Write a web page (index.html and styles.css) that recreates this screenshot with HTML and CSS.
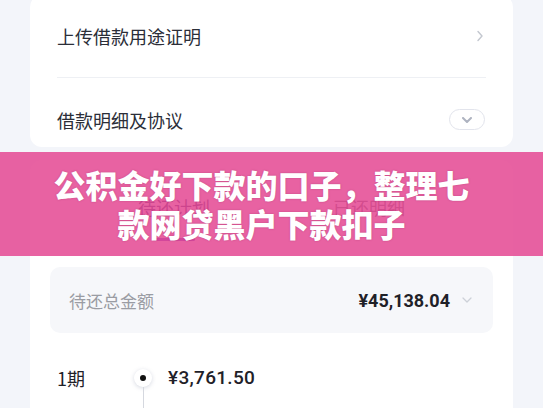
FILE: index.html
```html
<!DOCTYPE html>
<html lang="zh">
<head>
<meta charset="utf-8">
<link rel="stylesheet" href="styles.css">
</head>
<body>
<div class="page">
  <section class="card card-top">
    <div class="row row-first">
      <span class="row-label">上传借款用途证明</span>
      <svg class="chev-right" width="8" height="12" viewBox="0 0 8 12"><path d="M2 1.5 L6 6 L2 10.5" fill="none" stroke="#c3c7cf" stroke-width="1.4" stroke-linecap="round" stroke-linejoin="round"/></svg>
    </div>
    <div class="divider"></div>
    <div class="row row-second">
      <span class="row-label">借款明细及协议</span>
      <span class="pill"><svg width="10" height="6" viewBox="0 0 10 6"><path d="M1 1 L5 5 L9 1" fill="none" stroke="#aeb3c0" stroke-width="2" stroke-linecap="round" stroke-linejoin="round"/></svg></span>
    </div>
  </section>

  <section class="card card-plan">
    <div class="tabs">
      <div class="tab tab-active">待还计划<span class="tab-line"></span></div>
      <div class="tab">已还明细</div>
    </div>
    <div class="total">
      <span class="total-label">待还总金额</span>
      <span class="total-right">
        <span class="total-amount">¥45,138.04</span>
        <svg width="10" height="6" viewBox="0 0 10 6"><path d="M1 1 L5 5 L9 1" fill="none" stroke="#cdd1d8" stroke-width="1.3" stroke-linecap="round" stroke-linejoin="round"/></svg>
      </span>
    </div>
    <div class="term">
      <div class="term-left">
        <div class="term-name">1期</div>
        <div class="term-date">2024/08/20</div>
      </div>
      <div class="term-axis">
        <span class="dot-halo"><span class="dot"></span></span>
        <span class="axis-line"></span>
      </div>
      <div class="term-right">
        <div class="term-amount">¥3,761.50</div>
        <div class="term-detail">本金 ¥3,500.00　利息 ¥261.50</div>
      </div>
    </div>
  </section>
</div>

<div class="banner">
  <p class="banner-text">公积金好下款的口子，整理七<br>款网贷黑户下款扣子</p>
</div>
</body>
</html>
```

FILE: styles.css
```css
html, body {
  margin: 0;
  padding: 0;
}
body {
  background: #f3f5fa;
  font-family: "Noto Sans CJK SC", "Noto Sans", sans-serif;
  color: #2a2d36;
  width: 543px;
  height: 408px;
  overflow: hidden;
  position: relative;
}
.page {
  display: flex;
  flex-direction: column;
  gap: 13px;
  padding: 0 30px;
  margin-top: -5px;
}
.card {
  background: #ffffff;
  border-radius: 12px;
}
.card-top {
  padding: 0 27px;
}
.row {
  display: flex;
  justify-content: space-between;
  align-items: center;
}
.row-first {
  height: 82px;
}
.row-second {
  height: 69px;
  align-items: flex-start;
  padding-top: 30px;
  box-sizing: border-box;
}
.row-label {
  font-size: 18px;
  line-height: 24px;
  color: #2b2e38;
}
.chev-right {
  margin-right: 2px;
}
.divider {
  height: 1px;
  background: #eef0f4;
}
.pill {
  width: 36px;
  height: 21px;
  box-sizing: border-box;
  border: 1px solid #e2e4ec;
  border-radius: 11px;
  display: flex;
  align-items: center;
  justify-content: center;
  margin-top: 1px;
  margin-right: 1px;
}

.card-plan {
  padding: 35px 20px 0;
  height: 300px;
}
.tabs {
  display: flex;
  justify-content: center;
}
.tab {
  width: 195px;
  display: flex;
  flex-direction: column;
  align-items: center;
  font-size: 18px;
  line-height: 24px;
  color: #6e6470;
}
.tab-active {
  color: #3b2f6e;
}
.tab-line {
  width: 42px;
  height: 3px;
  border-radius: 2px;
  background: #6a3fc9;
  margin-top: 19px;
}
.tab:not(.tab-active) {
  padding-bottom: 22px;
}
.total {
  margin-top: 26px;
  height: 66px;
  border-radius: 10px;
  background: #f6f7fa;
  display: flex;
  align-items: center;
  justify-content: space-between;
  padding: 0 21px 0 19px;
}
.total-label {
  font-size: 17px;
  color: #9a9ca3;
}
.total-right {
  display: flex;
  align-items: center;
  gap: 12px;
}
.total-amount {
  font-family: "Roboto", "Noto Sans", sans-serif;
  font-weight: 700;
  font-size: 18px;
  letter-spacing: 0;
  color: #1f2128;
}
.term {
  display: flex;
  margin-top: 33px;
  padding-left: 7px;
}
.term-left {
  width: 77px;
}
.term-name {
  font-size: 18px;
  line-height: 24px;
  color: #1f2128;
}
.term-date, .term-detail {
  font-size: 13px;
  color: #b0b3ba;
  margin-top: 14px;
}
.term-axis {
  width: 18px;
  display: flex;
  flex-direction: column;
  align-items: center;
  padding-top: 3px;
}
.dot-halo {
  width: 18px;
  height: 18px;
  border-radius: 50%;
  background: #fff;
  box-shadow: 0 1px 4px rgba(120, 130, 160, 0.3);
  display: flex;
  align-items: center;
  justify-content: center;
}
.dot {
  width: 6px;
  height: 6px;
  border-radius: 50%;
  background: #111;
}
.axis-line {
  width: 1px;
  height: 40px;
  background: #d5d8df;
}
.term-right {
  padding-left: 16px;
}
.term-amount {
  font-family: "Roboto", "Noto Sans", sans-serif;
  font-weight: 500;
  font-size: 19px;
  line-height: 24px;
  color: #1f2128;
  letter-spacing: 0.3px;
}

.banner {
  position: absolute;
  left: 0;
  top: 152px;
  width: 543px;
  height: 104px;
  background: rgba(228, 72, 147, 0.86);
  display: flex;
  align-items: center;
  justify-content: center;
}
.banner-text {
  margin: 0 20px 0 0;
  font-family: "Noto Sans CJK SC", sans-serif;
  font-weight: 900;
  font-size: 32px;
  line-height: 39px;
  color: #ffffff;
  text-align: center;
  text-shadow: 0 0 2px rgba(120, 20, 70, 0.35);
}
```
